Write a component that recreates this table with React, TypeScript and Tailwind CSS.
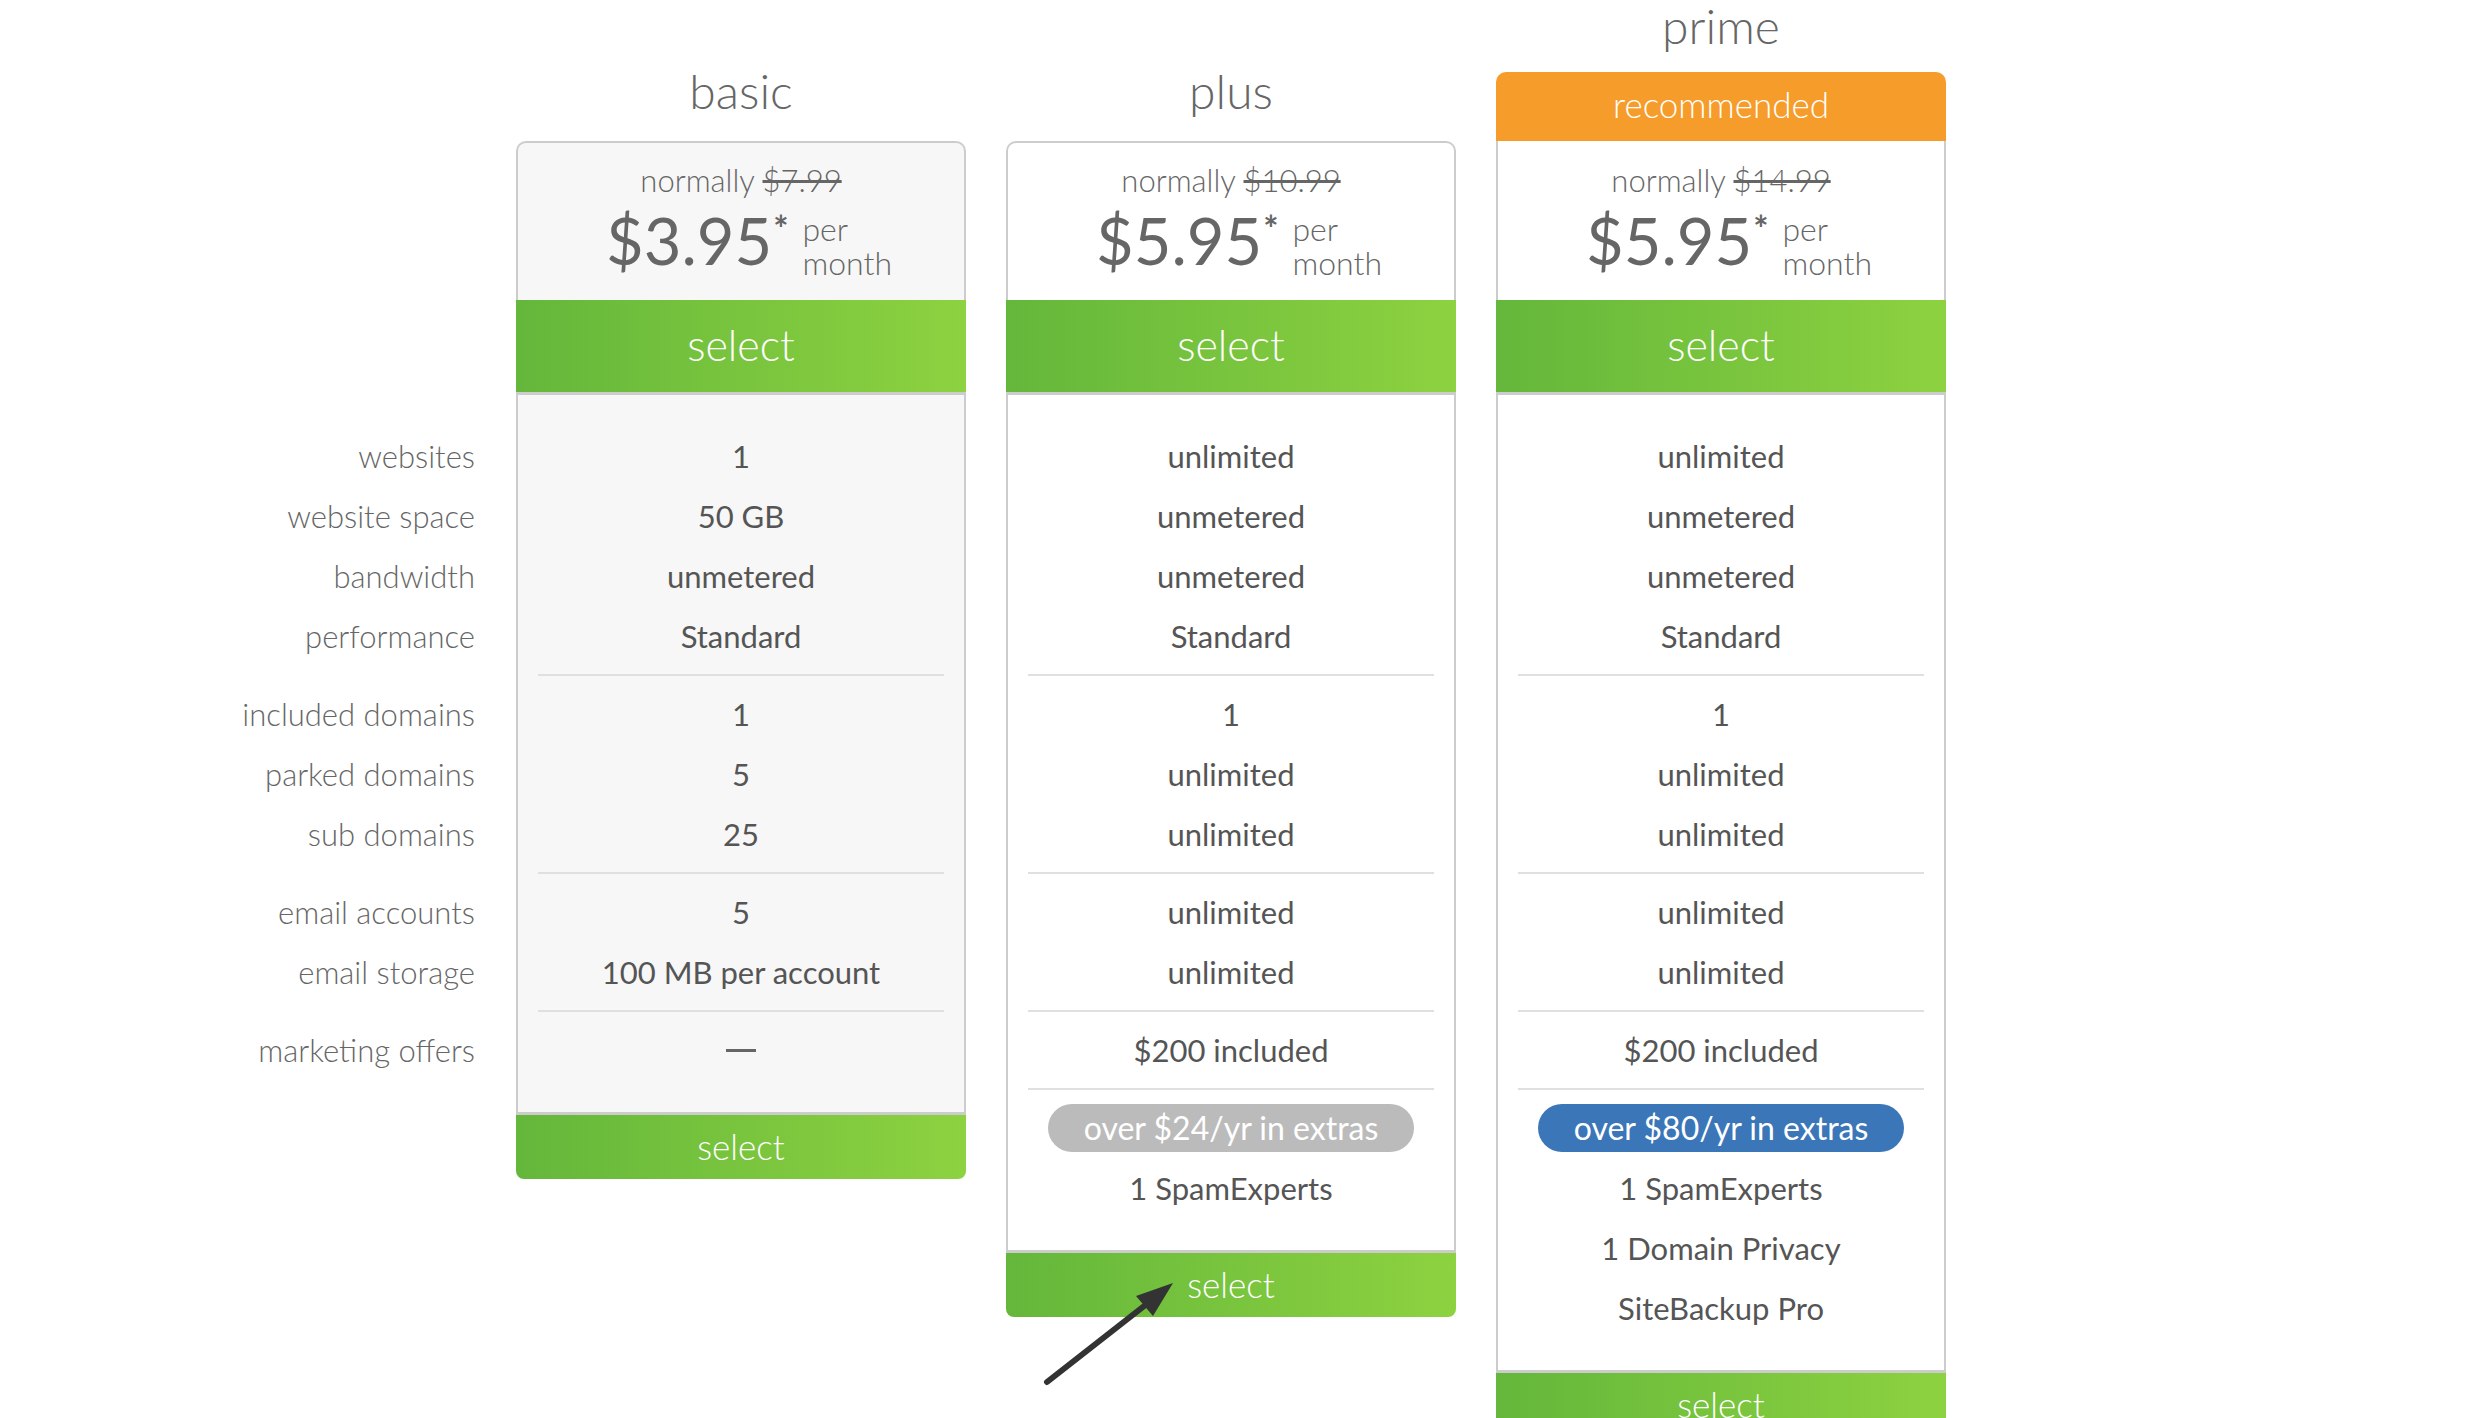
import React from "react";

type Plan = {
  name: string;
  was: string;
  price: string;
  bodyBg: string;
  recommended?: boolean;
  groups: string[][];
  marketing: string;
  extras?: { text: string; color: string; items: string[] };
};

const plans: Plan[] = [
  {
    name: "basic",
    was: "$7.99",
    price: "$3.95",
    bodyBg: "bg-[#f7f7f7]",
    groups: [
      ["1", "50 GB", "unmetered", "Standard"],
      ["1", "5", "25"],
      ["5", "100 MB per account"],
    ],
    marketing: "—",
  },
  {
    name: "plus",
    was: "$10.99",
    price: "$5.95",
    bodyBg: "bg-white",
    groups: [
      ["unlimited", "unmetered", "unmetered", "Standard"],
      ["1", "unlimited", "unlimited"],
      ["unlimited", "unlimited"],
    ],
    marketing: "$200 included",
    extras: { text: "over $24/yr in extras", color: "bg-[#bbbbbb]", items: ["1 SpamExperts"] },
  },
  {
    name: "prime",
    was: "$14.99",
    price: "$5.95",
    bodyBg: "bg-white",
    recommended: true,
    groups: [
      ["unlimited", "unmetered", "unmetered", "Standard"],
      ["1", "unlimited", "unlimited"],
      ["unlimited", "unlimited"],
    ],
    marketing: "$200 included",
    extras: {
      text: "over $80/yr in extras",
      color: "bg-[#3b76b8]",
      items: ["1 SpamExperts", "1 Domain Privacy", "SiteBackup Pro"],
    },
  },
];

const labels: string[][] = [
  ["websites", "website space", "bandwidth", "performance"],
  ["included domains", "parked domains", "sub domains"],
  ["email accounts", "email storage"],
  ["marketing offers"],
];

function Divider() {
  return <div className="mx-[20px] my-[8px] h-[2px] bg-[#e0e0e0]" />;
}

function Row({ children }: { children: React.ReactNode }) {
  return (
    <div className="h-[60px] flex items-center justify-center text-[31px] text-[#555]">{children}</div>
  );
}

function Card({ plan }: { plan: Plan }) {
  return (
    <div className="w-[450px] flex flex-col">
      <div className="h-[141px] flex flex-col justify-end items-stretch">
        {plan.recommended ? (
          <>
            <div className="text-center text-[48px] leading-none font-light text-[#666] mb-[22px]">{plan.name}</div>
            <div className="h-[69px] rounded-t-[10px] bg-[#f69c2b] flex items-center justify-center text-white text-[35px] font-light pb-[4px]">
              recommended
            </div>
          </>
        ) : (
          <div className="text-center text-[48px] leading-none font-light text-[#666] mb-[26px]">{plan.name}</div>
        )}
      </div>
      <div
        className={
          plan.recommended
            ? `h-[159px] border-x-2 border-[#cccccc] ${plan.bodyBg} flex flex-col items-center pt-[21px]`
            : `h-[159px] border-x-2 border-t-2 border-[#cccccc] rounded-t-[10px] ${plan.bodyBg} flex flex-col items-center pt-[19px]`
        }
      >
        <div className="text-[31px] leading-[36px] font-light text-[#666]">
          normally <span className="line-through">{plan.was}</span>
        </div>
        <div className="mt-[10px] pl-[16px] flex items-start text-[#666]">
          <div className="text-[65px] leading-none">{plan.price}</div>
          <div className="text-[36px] leading-none font-bold ml-[1px] mt-[2px]">*</div>
          <div className="ml-[14px] mt-[4px] text-[32px] leading-[34px] font-light text-left">
            per
            <br />
            month
          </div>
        </div>
      </div>
      <div className="h-[92px] bg-gradient-to-r from-[#64b73b] to-[#8dd240] flex items-center justify-center text-white text-[43px] font-light pb-[2px]">
        select
      </div>
      <div className={`border-x-2 border-t-[3px] border-b-[3px] border-[#cccccc] ${plan.bodyBg} pt-[31px] pb-[32px]`}>
        {plan.groups.map((g, gi) => (
          <React.Fragment key={gi}>
            {g.map((v, i) => (
              <Row key={i}>{v}</Row>
            ))}
            <Divider />
          </React.Fragment>
        ))}
        {plan.marketing === "—" ? (
          <div className="h-[60px] flex items-center justify-center">
            <div className="w-[30px] h-[3px] bg-[#666]" />
          </div>
        ) : (
          <Row>{plan.marketing}</Row>
        )}
        {plan.extras && (
          <>
            <Divider />
            <div className="h-[60px] flex items-center justify-center">
              <div
                className={`${plan.extras.color} h-[48px] w-[366px] rounded-full flex items-center justify-center text-white text-[32px]`}
              >
                {plan.extras.text}
              </div>
            </div>
            {plan.extras.items.map((it, i) => (
              <Row key={i}>{it}</Row>
            ))}
          </>
        )}
      </div>
      <div className="h-[64px] rounded-b-[8px] bg-gradient-to-r from-[#64b73b] to-[#8dd240] flex items-center justify-center text-white text-[35px] font-light pb-[2px]">
        select
      </div>
    </div>
  );
}

export default function App() {
  return (
    <div className="relative h-screen w-full overflow-hidden bg-white font-[Lato,sans-serif]">
      <div className="flex items-start pt-[2px]">
        <div className="w-[475px] pt-[424px] flex flex-col">
          {labels.map((g, gi) => (
            <React.Fragment key={gi}>
              {g.map((l, i) => (
                <div key={i} className="h-[60px] flex items-center justify-end text-[31px] font-light text-[#666]">
                  {l}
                </div>
              ))}
              {gi < labels.length - 1 && <div className="h-[18px]" />}
            </React.Fragment>
          ))}
        </div>
        <div className="ml-[41px] -mt-[2px] flex items-start gap-[40px]">
          {plans.map((p) => (
            <Card key={p.name} plan={p} />
          ))}
        </div>
      </div>
      <svg className="absolute left-0 top-0 pointer-events-none" width="2490" height="1418">
        <line x1="1047" y1="1382" x2="1148" y2="1303" stroke="#333" strokeWidth="6" strokeLinecap="round" />
        <polygon points="1173,1283 1136,1296 1153,1316" fill="#333" />
      </svg>
    </div>
  );
}
